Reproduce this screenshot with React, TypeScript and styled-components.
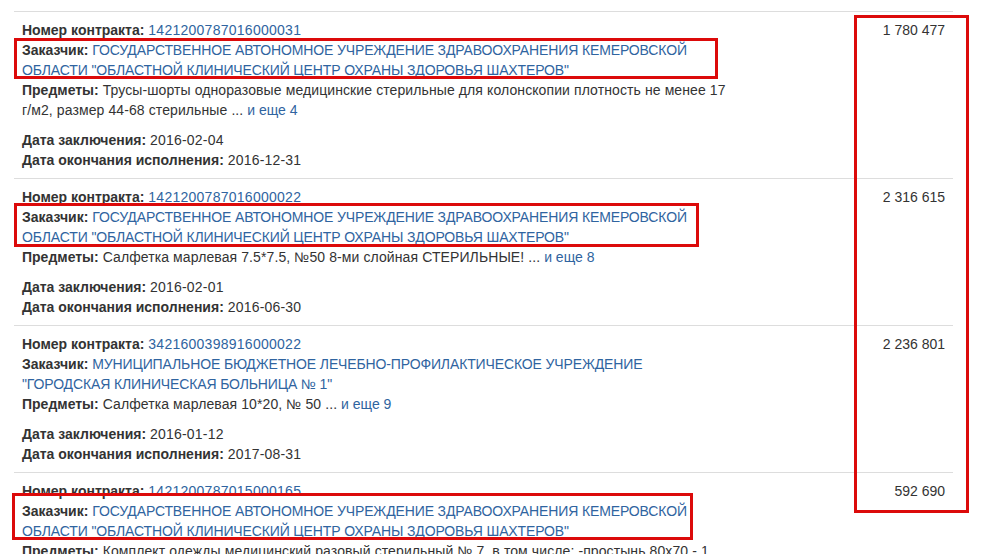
import React from "react";
import styled, { createGlobalStyle } from "styled-components";

const GlobalStyle = createGlobalStyle`
  html, body { margin: 0; padding: 0; background: #fff; }
  body {
    font-family: "Liberation Sans", Arial, Helvetica, sans-serif;
    font-size: 14px;
    line-height: 20px;
    color: #333;
    overflow: hidden;
  }
`;

const Page = styled.div`
  position: relative;
  width: 985px;
  height: 554px;
  overflow: hidden;
  padding: 11px 0 0 14px;
  box-sizing: border-box;
`;

const Table = styled.div`
  width: 939px;
  display: flex;
  flex-direction: column;
`;

const Row = styled.div`
  display: grid;
  grid-template-columns: 724px 215px;
  border-top: 1px solid #ddd;
`;

const MainCell = styled.div`
  padding: 8px;
  display: flex;
  flex-direction: column;
  gap: 10px;
`;

const Block = styled.div`
  display: flex;
  flex-direction: column;
`;

const Line = styled.div``;

const Label = styled.strong`
  font-weight: bold;
  color: #333;
`;

const Link = styled.a<{ $track?: number }>`
  color: #2f64a0;
  text-decoration: none;
  letter-spacing: ${(p) => p.$track ?? 0}px;
`;

const Value = styled.span<{ $track?: number }>`
  letter-spacing: ${(p) => p.$track ?? 0}px;
`;

const SumCell = styled.div`
  padding: 8px;
  text-align: right;
  color: #333;
`;

const Mark = styled.div<{ $l: number; $t: number; $w: number; $h: number }>`
  position: absolute;
  left: ${(p) => p.$l}px;
  top: ${(p) => p.$t}px;
  width: ${(p) => p.$w}px;
  height: ${(p) => p.$h}px;
  border: 3px solid #dc0a0a;
  box-sizing: border-box;
  pointer-events: none;
`;

type Contract = {
  number: string;
  customer: string;
  items: string;
  more?: string;
  signed: string;
  end: string;
  sum: string;
};

const GAUZ =
  'ГОСУДАРСТВЕННОЕ АВТОНОМНОЕ УЧРЕЖДЕНИЕ ЗДРАВООХРАНЕНИЯ КЕМЕРОВСКОЙ ОБЛАСТИ "ОБЛАСТНОЙ КЛИНИЧЕСКИЙ ЦЕНТР ОХРАНЫ ЗДОРОВЬЯ ШАХТЕРОВ"';

const contracts: Contract[] = [
  {
    number: "1421200787016000031",
    customer: GAUZ,
    items:
      "Трусы-шорты одноразовые медицинские стерильные для колонскопии плотность не менее 17 г/м2, размер 44-68 стерильные ...",
    more: "и еще 4",
    signed: "2016-02-04",
    end: "2016-12-31",
    sum: "1 780 477",
  },
  {
    number: "1421200787016000022",
    customer: GAUZ,
    items: "Салфетка марлевая 7.5*7.5, №50 8-ми слойная СТЕРИЛЬНЫЕ! ...",
    more: "и еще 8",
    signed: "2016-02-01",
    end: "2016-06-30",
    sum: "2 316 615",
  },
  {
    number: "3421600398916000022",
    customer:
      'МУНИЦИПАЛЬНОЕ БЮДЖЕТНОЕ ЛЕЧЕБНО-ПРОФИЛАКТИЧЕСКОЕ УЧРЕЖДЕНИЕ "ГОРОДСКАЯ КЛИНИЧЕСКАЯ БОЛЬНИЦА № 1"',
    items: "Салфетка марлевая 10*20, № 50 ...",
    more: "и еще 9",
    signed: "2016-01-12",
    end: "2017-08-31",
    sum: "2 236 801",
  },
  {
    number: "1421200787015000165",
    customer: GAUZ,
    items:
      "Комплект одежды медицинский разовый стерильный № 7, в том числе: -простынь 80х70 - 1 шт. ...",
    more: "и еще 3",
    signed: "2015-12-28",
    end: "2016-12-31",
    sum: "592 690",
  },
];

const marks = [
  { l: 14, t: 38, w: 704, h: 41 },
  { l: 14, t: 203, w: 685, h: 44 },
  { l: 854, t: 15, w: 115, h: 498 },
  { l: 12, t: 493, w: 681, h: 47 },
];

export default function App() {
  return (
    <Page>
      <GlobalStyle />
      <Table>
        {contracts.map((c) => (
          <Row key={c.number}>
            <MainCell>
              <Block>
                <Line>
                  <Label>Номер контракта:</Label>{" "}
                  <Link href="#" $track={0.26}>
                    {c.number}
                  </Link>
                </Line>
                <Line>
                  <Label>Заказчик:</Label>{" "}
                  <Link href="#" $track={-0.13}>
                    {c.customer}
                  </Link>
                </Line>
                <Line>
                  <Label>Предметы:</Label> <Value $track={0.1}>{c.items}</Value>{" "}
                  {c.more && <Link href="#">{c.more}</Link>}
                </Line>
              </Block>
              <Block>
                <Line>
                  <Label>Дата заключения:</Label> <Value $track={0.2}>{c.signed}</Value>
                </Line>
                <Line>
                  <Label>Дата окончания исполнения:</Label>{" "}
                  <Value $track={0.2}>{c.end}</Value>
                </Line>
              </Block>
            </MainCell>
            <SumCell>{c.sum}</SumCell>
          </Row>
        ))}
      </Table>
      {marks.map((m, i) => (
        <Mark key={i} $l={m.l} $t={m.t} $w={m.w} $h={m.h} />
      ))}
    </Page>
  );
}
